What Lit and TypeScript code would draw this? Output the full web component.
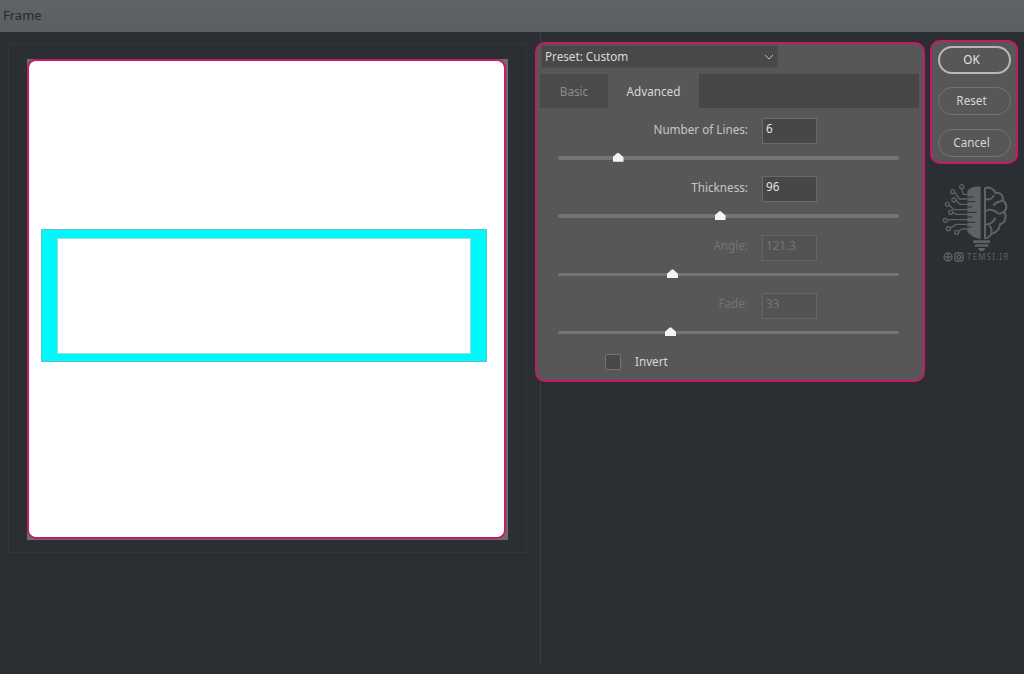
import { LitElement, html, css, svg } from "lit";
import { customElement } from "lit/decorators.js";

const fields = [
  { label: "Number of Lines:", value: "6", thumb: 60, off: false },
  { label: "Thickness:", value: "96", thumb: 162, off: false },
  { label: "Angle:", value: "121.3", thumb: 114.5, off: true },
  { label: "Fade:", value: "33", thumb: 112.5, off: true },
];

const circuit = [
  "M112 58 H100 L95 40", "M112 72 H88 L74 52", "M112 88 H90 L78 76", "M112 104 H70 L58 90",
  "M112 118 H78 L68 113", "M112 134 H60 L52 136", "M112 148 H78 L60 160", "M112 162 H95 L84 171",
];
const nodes = [[95, 35], [68, 50], [72, 75], [52, 88], [62, 112], [46, 136], [55, 161], [80, 172]];

const logo = svg`
  <path fill="#5e6165" d="M152 35 C135 32 120 38 112 48 L112 170 C120 180 135 190 152 192 Z"/>
  <g fill="none" stroke="#2b2e33" stroke-width="3">
    <path d="M112 66 H130 M112 80 H136 M112 96 H126 M112 112 H140 M112 126 H128 M112 142 H136 M112 156 H124"/>
  </g>
  <g fill="none" stroke="#5e6165" stroke-width="4">
    ${circuit.map((d) => svg`<path d=${d}/>`)}
    ${nodes.map(([x, y]) => svg`<circle cx=${x} cy=${y} r="6"/>`)}
  </g>
  <g fill="none" stroke="#5e6165" stroke-width="6">
    <path d="M165 40 C178 34 192 42 196 54 C210 50 222 62 218 76 C232 84 232 102 222 110 C232 124 226 144 210 148 C208 166 194 176 184 176 C178 186 172 190 165 190 Z"/>
    <path d="M165 72 C178 76 188 70 192 60 M218 76 C208 82 196 80 190 92 M168 108 C182 98 196 108 206 116 M222 110 C216 116 212 116 206 116 M165 148 C180 150 192 140 196 128 M184 176 C186 166 184 158 178 152"/>
  </g>
  <path fill="#5e6165" d="M130 196 H180 V204 H130 Z M135 208 H175 V215 H135 Z M143 219 H167 L160 228 H150 Z"/>
`;

@customElement("app-root")
export class AppRoot extends LitElement {
  static styles = css`
    :host {
      display: block;
      width: 1024px;
      height: 674px;
      overflow: hidden;
      background: #2b2e33;
      font-family: "Noto Sans", "Open Sans", sans-serif;
      font-size: 11.7px;
      color: #c6c6c6;
    }
    .title {
      height: 32px;
      box-sizing: border-box;
      padding-left: 3px;
      font-size: 13px;
      line-height: 30px;
      color: #26292d;
      background: linear-gradient(#606367, #5a5d61);
    }
    .main { display: flex; align-items: flex-start; }
    .left {
      width: 541px;
      height: 633px;
      box-sizing: border-box;
      padding: 12px 0 0 8px;
      border-right: 1px solid #383b40;
    }
    .preview {
      width: 519px;
      height: 509px;
      box-sizing: border-box;
      padding: 14px 0 0 18px;
      border: 1px solid #33363b;
    }
    .matte { width: 481px; height: 481px; background: #6c6c6c; }
    .canvas {
      width: 479px;
      height: 480px;
      box-sizing: border-box;
      padding: 168px 0 0 12px;
      background: #fff;
      border: 2.5px solid #c71a66;
      border-radius: 9px;
    }
    .frame {
      width: 446px;
      height: 133px;
      box-sizing: border-box;
      border-style: solid;
      border-color: #00f7fb;
      border-width: 9px 16px 8px;
      background: #fff;
      outline: 1px solid #5cc4c8;
      outline-offset: -1px;
      box-shadow: inset 0 0 0 1px #9fd8da;
    }
    .panel {
      box-sizing: border-box;
      width: 390px;
      height: 340px;
      margin: 10px 0 0 -6px;
      padding: 1px 4px 0 3px;
      background: #575757;
      border: 2.5px solid #c71a66;
      border-radius: 10px;
    }
    .preset {
      display: flex;
      align-items: center;
      justify-content: space-between;
      box-sizing: border-box;
      width: 237px;
      height: 23px;
      margin-left: 1px;
      padding: 0 2px 0 3px;
      background: #484848;
      border: 1px solid #505050;
      color: #d8d8d8;
    }
    .preset span { padding-bottom: 2px; }
    .chev { width: 12px; height: 12px; fill: none; stroke: #bdbdbd; stroke-width: 1; }
    .tabs {
      display: flex;
      height: 34px;
      margin-top: 6px;
      background: #474747;
    }
    .tab { line-height: 35px; text-align: center; }
    .basic { width: 68px; background: #4b4b4b; color: #8d8d8d; }
    .advanced { width: 91px; background: #575757; color: #d8d8d8; }
    .fields { padding-top: 10.3px; }
    .field { height: 58.2px; }
    .row {
      display: grid;
      grid-template-columns: 208px 55px;
      column-gap: 14px;
      align-items: center;
      height: 26px;
    }
    .label { text-align: right; padding-bottom: 5px; }
    .value {
      box-sizing: border-box;
      height: 26px;
      padding-left: 3px;
      line-height: 18px;
      background: #474747;
      border: 1px solid #6a6a6a;
      color: #e2e2e2;
    }
    .off .label { color: #747474; }
    .off .value { background: #535353; border-color: #656565; color: #737373; }
    .track {
      position: relative;
      width: 341px;
      height: 3.5px;
      margin: 12px 0 0 18px;
      background: #747474;
      border-radius: 2px;
    }
    .thumb {
      position: absolute;
      top: -3.5px;
      width: 11px;
      height: 9px;
      margin-left: -5.5px;
      background: #f4f4f4;
      clip-path: polygon(50% 0, 62% 8%, 100% 50%, 100% 100%, 0 100%, 0 50%, 38% 8%);
    }
    .invert {
      display: flex;
      align-items: flex-start;
      gap: 14px;
      margin: 2.5px 0 0 65px;
      color: #d8d8d8;
    }
    .invert span { line-height: 14px; }
    .box {
      box-sizing: border-box;
      width: 16px;
      height: 16px;
      background: #484848;
      border: 1px solid #757575;
      border-radius: 2px;
    }
    .side { margin: 8px 0 0 5px; }
    .buttons {
      display: flex;
      flex-direction: column;
      gap: 13.5px;
      box-sizing: border-box;
      width: 88px;
      height: 124px;
      padding: 3.5px 5.5px 0;
      background: #575757;
      border: 2.5px solid #c71a66;
      border-radius: 10px;
    }
    .btn {
      box-sizing: border-box;
      height: 28px;
      padding-right: 5px;
      line-height: 25px;
      text-align: center;
      border: 1px solid #737373;
      border-radius: 14px;
      color: #d4d4d4;
    }
    .primary { border: 2px solid #b8b8b8; line-height: 22px; color: #e4e4e4; }
    .brand { margin-top: 11px; width: 90px; color: #5e6165; }
    .brand svg { display: block; width: 90px; height: 76px; }
    .tag {
      display: flex;
      align-items: center;
      gap: 1px;
      margin: 1px 0 0 13px;
      font-size: 8px;
      line-height: 10px;
      letter-spacing: 1.2px;
    }
    .tag svg { width: 10px; height: 10px; fill: none; stroke: #5e6165; stroke-width: 1.4; }
    .tag span { margin-left: 2px; }
  `;

  render() {
    return html`
      <div class="title">Frame</div>
      <div class="main">
        <div class="left">
          <div class="preview">
            <div class="matte">
              <div class="canvas"><div class="frame"></div></div>
            </div>
          </div>
        </div>
        <div class="panel">
          <div class="preset">
            <span>Preset: Custom</span>
            <svg class="chev" viewBox="0 0 12 12"><path d="M2 4 L6 8 L10 4"/></svg>
          </div>
          <div class="tabs">
            <div class="tab basic">Basic</div>
            <div class="tab advanced">Advanced</div>
          </div>
          <div class="fields">
            ${fields.map(
              (f) => html`
                <div class="field ${f.off ? "off" : ""}">
                  <div class="row">
                    <div class="label">${f.label}</div>
                    <div class="value">${f.value}</div>
                  </div>
                  <div class="track"><div class="thumb" style="left:${f.thumb}px"></div></div>
                </div>
              `
            )}
          </div>
          <div class="invert"><div class="box"></div><span>Invert</span></div>
        </div>
        <div class="side">
          <div class="buttons">
            <div class="btn primary">OK</div>
            <div class="btn">Reset</div>
            <div class="btn">Cancel</div>
          </div>
          <div class="brand">
            <svg viewBox="0 0 270 228">${logo}</svg>
            <div class="tag">
              <svg viewBox="0 0 10 10"><circle cx="5" cy="5" r="4"/><path d="M1 5 H9 M5 1 V9"/></svg>
              <svg viewBox="0 0 10 10"><rect x="1" y="1" width="8" height="8" rx="2"/><circle cx="5" cy="5" r="1.8"/></svg>
              <span>TEMSI.IR</span>
            </div>
          </div>
        </div>
      </div>
    `;
  }
}
